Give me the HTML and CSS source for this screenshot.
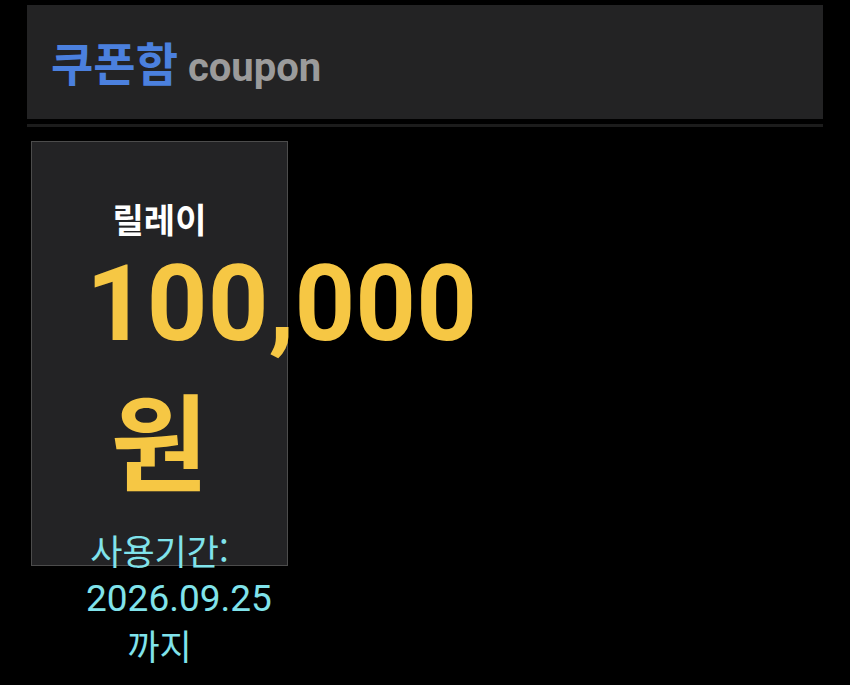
FILE: index.html
```html
<!DOCTYPE html>
<html lang="ko">
<head>
    <meta charset="UTF-8">
    <meta name="viewport" content="width=device-width, initial-scale=1.0">
    <title>쿠폰함</title>
    <link rel="stylesheet" href="styles.css">
</head>
<body>
    <div class="page">
        <header class="top">
            <h1><span class="title">쿠폰함</span> <span class="sub">coupon</span></h1>
        </header>
        <hr class="divider">

        <div class="coupon-list">
            <div class="coupon">
                <div class="coupon-name">릴레이</div>
                <div class="amount">
                    <span class="num">100,000</span>
                    <span class="unit">원</span>
                </div>
                <p class="expire">사용기간: <span class="date">2026.09.25</span> 까지</p>
            </div>
        </div>
    </div>
</body>
</html>
```

FILE: styles.css
```css
* {
    box-sizing: border-box;
    margin: 0;
    padding: 0;
}

html, body {
    height: 100%;
}

body {
    background-color: #000;
    font-family: Roboto, "Noto Sans CJK KR", sans-serif;
    color: #fff;
    overflow: hidden;
}

.page {
    padding: 5px 27px;
}

.top {
    height: 114px;
    display: flex;
    align-items: center;
    padding-left: 24px;
    padding-top: 2px;
    background-color: #232324;
}

.top h1 {
    font-weight: 700;
    line-height: 1;
}

.title {
    font-family: "Noto Sans CJK KR", sans-serif;
    font-size: 46px;
    color: #4b80de;
}

.sub {
    margin-left: 2px;
    font-family: Roboto, sans-serif;
    font-size: 40px;
    color: #9b9b9b;
}

.divider {
    border: none;
    height: 3px;
    margin-top: 5px;
    background-color: #1c1c1c;
}

.coupon-list {
    display: flex;
    gap: 16px;
    margin-top: 14px;
    padding-left: 4px;
}

.coupon {
    width: 257px;
    height: 425px;
    padding: 54px 54px 0;
    background-color: #232325;
    border: 1px solid #4c4c4c;
    text-align: center;
}

.coupon-name {
    font-family: "Noto Sans CJK KR", sans-serif;
    font-size: 34px;
    font-weight: 700;
    line-height: 46px;
    color: #fff;
}

.amount {
    color: #f6c744;
    font-weight: 700;
}

.amount .num {
    display: block;
    font-family: Roboto, sans-serif;
    font-size: 106px;
    line-height: 124px;
    white-space: nowrap;
}

.amount .unit {
    display: block;
    font-family: "Noto Sans CJK KR", sans-serif;
    font-size: 106px;
    line-height: 143px;
}

.expire {
    margin-top: 18px;
    font-family: "Noto Sans CJK KR", sans-serif;
    font-size: 35px;
    line-height: 46px;
    color: #80e3eb;
    word-break: keep-all;
}

.expire .date {
    font-family: Roboto, sans-serif;
    font-size: 37px;
}
```
